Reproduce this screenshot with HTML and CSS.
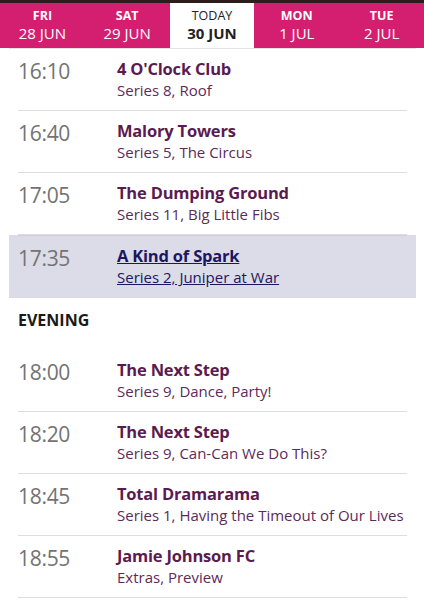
FILE: index.html
```html
<!DOCTYPE html>
<html lang="en">
<head>
<meta charset="utf-8">
<link rel="stylesheet" href="styles.css">
</head>
<body>
<div class="topline"></div>
<nav class="days">
  <a class="day"><span class="dname">FRI</span><span class="ddate">28 JUN</span></a>
  <a class="day"><span class="dname">SAT</span><span class="ddate">29 JUN</span></a>
  <a class="day today"><span class="dname">TODAY</span><span class="ddate">30 JUN</span></a>
  <a class="day"><span class="dname">MON</span><span class="ddate">1 JUL</span></a>
  <a class="day"><span class="dname">TUE</span><span class="ddate">2 JUL</span></a>
</nav>
<div class="list">
  <div class="row"><div class="inner"><span class="time">16:10</span><div class="info"><div class="title">4 O'Clock Club</div><div class="sub">Series 8, Roof</div></div></div></div>
  <div class="row"><div class="inner"><span class="time">16:40</span><div class="info"><div class="title">Malory Towers</div><div class="sub">Series 5, The Circus</div></div></div></div>
  <div class="row"><div class="inner"><span class="time">17:05</span><div class="info"><div class="title">The Dumping Ground</div><div class="sub">Series 11, Big Little Fibs</div></div></div></div>
  <div class="row now"><div class="inner"><span class="time">17:35</span><div class="info"><div class="title">A Kind of Spark</div><div class="sub">Series 2, Juniper at War</div></div></div></div>
  <h2 class="section">EVENING</h2>
  <div class="row"><div class="inner"><span class="time">18:00</span><div class="info"><div class="title">The Next Step</div><div class="sub">Series 9, Dance, Party!</div></div></div></div>
  <div class="row"><div class="inner"><span class="time">18:20</span><div class="info"><div class="title">The Next Step</div><div class="sub">Series 9, Can-Can We Do This?</div></div></div></div>
  <div class="row"><div class="inner"><span class="time">18:45</span><div class="info"><div class="title">Total Dramarama</div><div class="sub">Series 1, Having the Timeout of Our Lives</div></div></div></div>
  <div class="row"><div class="inner"><span class="time">18:55</span><div class="info"><div class="title">Jamie Johnson FC</div><div class="sub">Extras, Preview</div></div></div></div>
</div>
</body>
</html>
```
FILE: styles.css
```css
* { box-sizing: border-box; }
html, body { margin: 0; padding: 0; background: #fff; }
body {
  width: 424px;
  height: 600px;
  overflow: hidden;
  font-family: "Open Sans", "Noto Sans", sans-serif;
}
.topline { height: 3px; background: #2c1c1c; }
.days {
  display: grid;
  grid-template-columns: repeat(5, 1fr);
  height: 45px;
  background: #d41e6f;
}
.day {
  display: flex;
  flex-direction: column;
  align-items: center;
  justify-content: center;
  color: #fff;
  text-decoration: none;
  padding-top: 1px;
}
.dname { font-size: 12.5px; font-weight: 700; line-height: 14px; }
.ddate { font-size: 15px; line-height: 20px; }
.today { background: #fff; color: #222; }
.today .dname { font-weight: 400; }
.today .ddate { font-weight: 700; }
.list {
  border-top: 1px solid #e4e2e4;
  margin: 0 8px 0 9px;
}
.row { padding: 0 9px; }
.inner {
  display: grid;
  grid-template-columns: 99px 1fr;
  height: 62px;
  padding-top: 9px;
  border-bottom: 1px solid #dedede;
}
.time {
  font-size: 21px;
  line-height: 26px;
  color: #737373;
  letter-spacing: -0.3px;
}
.title {
  font-size: 16.5px;
  font-weight: 700;
  line-height: 22px;
  letter-spacing: -0.2px;
  color: #5b1b51;
}
.sub {
  font-size: 15px;
  line-height: 20px;
  color: #5e2a5a;
}
.now { background: #dcdbe8; }
.now .inner { border-bottom: none; border-top: 1px solid #cfcfd6; height: 63px; }
.now .title, .now .sub { color: #1b1760; text-decoration: underline; }
.section {
  margin: 0;
  padding: 11px 9px 0;
  height: 52px;
  font-size: 16px;
  font-weight: 700;
  color: #1a1a1a;
}
```
